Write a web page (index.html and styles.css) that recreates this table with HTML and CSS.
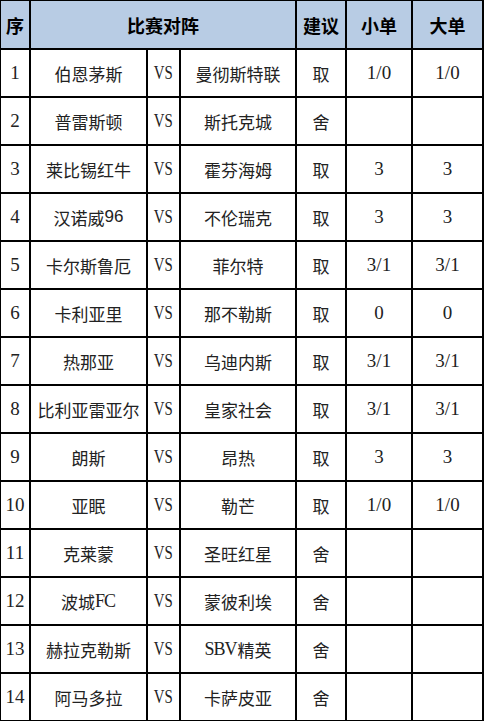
FILE: index.html
```html
<!DOCTYPE html>
<html lang="zh-CN">
<head>
<meta charset="utf-8">
<link rel="stylesheet" href="styles.css">
</head>
<body>
<div class="grid">
  <div class="c h">序</div><div class="c h span3">比赛对阵</div><div class="c h">建议</div><div class="c h">小单</div><div class="c h">大单</div>

  <div class="c l">1</div><div class="c">伯恩茅斯</div><div class="c"><span class="vs">VS</span></div><div class="c">曼彻斯特联</div><div class="c">取</div><div class="c l">1/0</div><div class="c l">1/0</div>
  <div class="c l">2</div><div class="c">普雷斯顿</div><div class="c"><span class="vs">VS</span></div><div class="c">斯托克城</div><div class="c">舍</div><div class="c"></div><div class="c"></div>
  <div class="c l">3</div><div class="c">莱比锡红牛</div><div class="c"><span class="vs">VS</span></div><div class="c">霍芬海姆</div><div class="c">取</div><div class="c l">3</div><div class="c l">3</div>
  <div class="c l">4</div><div class="c">汉诺威<span class="sans">96</span></div><div class="c"><span class="vs">VS</span></div><div class="c">不伦瑞克</div><div class="c">取</div><div class="c l">3</div><div class="c l">3</div>
  <div class="c l">5</div><div class="c">卡尔斯鲁厄</div><div class="c"><span class="vs">VS</span></div><div class="c">菲尔特</div><div class="c">取</div><div class="c l">3/1</div><div class="c l">3/1</div>
  <div class="c l">6</div><div class="c">卡利亚里</div><div class="c"><span class="vs">VS</span></div><div class="c">那不勒斯</div><div class="c">取</div><div class="c l">0</div><div class="c l">0</div>
  <div class="c l">7</div><div class="c">热那亚</div><div class="c"><span class="vs">VS</span></div><div class="c">乌迪内斯</div><div class="c">取</div><div class="c l">3/1</div><div class="c l">3/1</div>
  <div class="c l">8</div><div class="c">比利亚雷亚尔</div><div class="c"><span class="vs">VS</span></div><div class="c">皇家社会</div><div class="c">取</div><div class="c l">3/1</div><div class="c l">3/1</div>
  <div class="c l">9</div><div class="c">朗斯</div><div class="c"><span class="vs">VS</span></div><div class="c">昂热</div><div class="c">取</div><div class="c l">3</div><div class="c l">3</div>
  <div class="c l">10</div><div class="c">亚眠</div><div class="c"><span class="vs">VS</span></div><div class="c">勒芒</div><div class="c">取</div><div class="c l">1/0</div><div class="c l">1/0</div>
  <div class="c l">11</div><div class="c">克莱蒙</div><div class="c"><span class="vs">VS</span></div><div class="c">圣旺红星</div><div class="c">舍</div><div class="c"></div><div class="c"></div>
  <div class="c l">12</div><div class="c">波城<span class="lat">FC</span></div><div class="c"><span class="vs">VS</span></div><div class="c">蒙彼利埃</div><div class="c">舍</div><div class="c"></div><div class="c"></div>
  <div class="c l">13</div><div class="c">赫拉克勒斯</div><div class="c"><span class="vs">VS</span></div><div class="c"><span class="lat">SBV</span>精英</div><div class="c">舍</div><div class="c"></div><div class="c"></div>
  <div class="c l">14</div><div class="c">阿马多拉</div><div class="c"><span class="vs">VS</span></div><div class="c">卡萨皮亚</div><div class="c">舍</div><div class="c"></div><div class="c"></div>
</div>
</body>
</html>
```
FILE: styles.css
```css
html, body {
  margin: 0;
  padding: 0;
  background: #fff;
}
.grid {
  width: 484px;
  height: 721px;
  box-sizing: border-box;
  background: #000;
  padding: 1px 2px 1px 1px;
  display: grid;
  grid-template-columns: 28px 115px 31px 114px 48px 64px 69px;
  grid-template-rows: 47px repeat(14, 46px);
  gap: 2px;
  font-family: "Noto Sans CJK SC", sans-serif;
  font-size: 17px;
  color: #222;
}
.c {
  background: #fff;
  display: flex;
  align-items: center;
  justify-content: center;
  white-space: nowrap;
  overflow: hidden;
}
.l {
  font-family: "Liberation Serif", serif;
  font-size: 19px;
}
.lat {
  font-family: "Liberation Serif", serif;
  font-size: 18px;
  letter-spacing: -1px;
  margin-right: 1px;
}
.sans {
  font-family: "Liberation Sans", sans-serif;
  font-size: 17px;
}
.vs {
  display: inline-block;
  font-family: "Liberation Serif", serif;
  font-size: 19px;
  transform: scaleX(0.78);
}
.h {
  background: #b8cce4;
  font-weight: bold;
  font-size: 18px;
  color: #000;
}
.span3 {
  grid-column: span 3;
}
```
